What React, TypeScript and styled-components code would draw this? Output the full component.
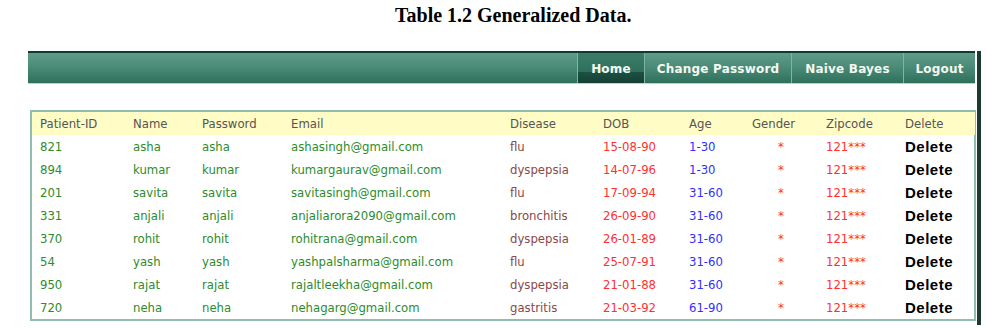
import styled, { createGlobalStyle } from "styled-components";

const GlobalStyle = createGlobalStyle`
  body {
    margin: 0;
    background: #ffffff;
    font-family: "DejaVu Sans", Verdana, sans-serif;
  }
`;

const Page = styled.div`
  width: 986px;
  height: 328px;
  overflow: hidden;
`;

const Title = styled.h3`
  margin: 0;
  height: 51px;
  padding: 4px 0 0 395px;
  box-sizing: border-box;
  font-family: "Liberation Serif", "Times New Roman", serif;
  font-size: 20px;
  font-weight: bold;
  color: #000;
`;

const Frame = styled.div`
  margin-left: 28px;
  width: 949px;
  height: 274px;
  border-right: 4px solid #1c3b31;
`;

const NavBar = styled.div`
  display: flex;
  justify-content: flex-end;
  height: 30px;
  margin-right: 2px;
  border-top: 2px solid #0e3a2f;
  border-bottom: 1px solid #b6d9cc;
  background: linear-gradient(#5e9c89, #4c8b77 45%, #2e705d);
`;

const NavItem = styled.div<{ $active?: boolean; $width: number }>`
  display: flex;
  align-items: center;
  justify-content: center;
  width: ${(p) => p.$width}px;
  border-left: 1px solid #7fb3a2;
  color: #f4f8f0;
  font-size: 12px;
  font-weight: bold;
  letter-spacing: 0.2px;
  padding-top: 2px;
  box-sizing: border-box;
  background: ${(p) =>
    p.$active
      ? "linear-gradient(#3c7c68 0, #2f705d 62%, #1c5242 62%, #173f35 100%)"
      : "transparent"};
`;

const TableBox = styled.div`
  margin: 26px 1px 0 2px;
  border: 2px solid #8dbfae;
`;

const Table = styled.table`
  width: 100%;
  border-collapse: collapse;
  table-layout: fixed;
  font-size: 11.7px;
`;

const HeadCell = styled.th`
  height: 23px;
  padding: 0 0 0 8px;
  background: #fffcc6;
  color: #555555;
  font-weight: normal;
  text-align: left;
`;

const Cell = styled.td<{ $color: string; $center?: boolean }>`
  height: 23px;
  padding: 0 0 0 ${(p) => (p.$center ? 0 : 8)}px;
  color: ${(p) => p.$color};
  text-align: ${(p) => (p.$center ? "center" : "left")};
`;

const DeleteCell = styled.td`
  height: 23px;
  padding: 0 0 0 8px;
  font-family: "Liberation Sans", Arial, sans-serif;
  font-size: 15px;
  font-weight: bold;
  letter-spacing: 0.5px;
  color: #000;
`;

const widths = [93, 69, 89, 219, 93, 86, 63, 74, 79, 78];
const headers = [
  "Patient-ID",
  "Name",
  "Password",
  "Email",
  "Disease",
  "DOB",
  "Age",
  "Gender",
  "Zipcode",
  "Delete",
];

const rows = [
  ["821", "asha", "asha", "ashasingh@gmail.com", "flu", "15-08-90", "1-30"],
  ["894", "kumar", "kumar", "kumargaurav@gmail.com", "dyspepsia", "14-07-96", "1-30"],
  ["201", "savita", "savita", "savitasingh@gmail.com", "flu", "17-09-94", "31-60"],
  ["331", "anjali", "anjali", "anjaliarora2090@gmail.com", "bronchitis", "26-09-90", "31-60"],
  ["370", "rohit", "rohit", "rohitrana@gmail.com", "dyspepsia", "26-01-89", "31-60"],
  ["54", "yash", "yash", "yashpalsharma@gmail.com", "flu", "25-07-91", "31-60"],
  ["950", "rajat", "rajat", "rajaltleekha@gmail.com", "dyspepsia", "21-01-88", "31-60"],
  ["720", "neha", "neha", "nehagarg@gmail.com", "gastritis", "21-03-92", "61-90"],
];

const green = "#2c8c2c";
const brown = "#8a4848";
const red = "#ff3030";
const blue = "#3030ff";

export default function App() {
  return (
    <Page>
      <GlobalStyle />
      <Title>Table 1.2 Generalized Data.</Title>
      <Frame>
        <NavBar>
          <NavItem $active $width={67}>Home</NavItem>
          <NavItem $width={147}>Change Password</NavItem>
          <NavItem $width={112}>Naive Bayes</NavItem>
          <NavItem $width={72}>Logout</NavItem>
        </NavBar>
        <TableBox>
          <Table>
            <colgroup>
              {widths.map((w, i) => (
                <col key={i} style={{ width: w }} />
              ))}
            </colgroup>
            <thead>
              <tr>
                {headers.map((h) => (
                  <HeadCell key={h}>{h}</HeadCell>
                ))}
              </tr>
            </thead>
            <tbody>
              {rows.map((r) => (
                <tr key={r[0]}>
                  <Cell $color={green}>{r[0]}</Cell>
                  <Cell $color={green}>{r[1]}</Cell>
                  <Cell $color={green}>{r[2]}</Cell>
                  <Cell $color={green}>{r[3]}</Cell>
                  <Cell $color={brown}>{r[4]}</Cell>
                  <Cell $color={red}>{r[5]}</Cell>
                  <Cell $color={blue}>{r[6]}</Cell>
                  <Cell $color={red} $center>*</Cell>
                  <Cell $color={red}>121***</Cell>
                  <DeleteCell>Delete</DeleteCell>
                </tr>
              ))}
            </tbody>
          </Table>
        </TableBox>
      </Frame>
    </Page>
  );
}
